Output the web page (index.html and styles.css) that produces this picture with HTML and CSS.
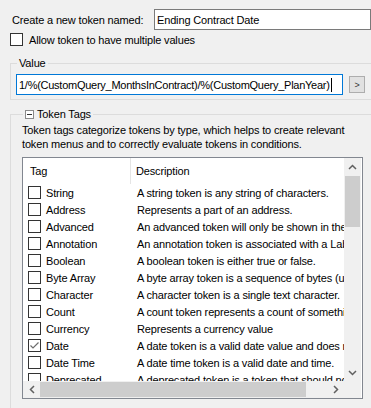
FILE: index.html
```html
<!DOCTYPE html>
<html lang="en">
<head>
  <meta charset="UTF-8">
  <title>New Token</title>
  <link rel="stylesheet" href="styles.css">
</head>
<body>

  <div class="dialog">
    <div class="name-row">
      <span class="name-label">Create a new token named:</span>
      <div class="textbox name-box">Ending Contract Date</div>
    </div>

    <div class="multi-row">
      <span class="check"></span>
      <span>Allow token to have multiple values</span>
    </div>

    <fieldset class="group value-group">
      <legend>Value</legend>
      <div class="value-row">
        <div class="textbox value-box">1/%(CustomQuery_MonthsInContract)/%(CustomQuery_PlanYear)<span class="caret"></span></div>
        <div class="pick-btn">&gt;</div>
      </div>
    </fieldset>

    <fieldset class="group tags-group">
      <legend><span class="collapse"></span>Token Tags</legend>
      <p class="tags-desc">Token tags categorize tokens by type, which helps to create relevant token menus and to correctly evaluate tokens in conditions.</p>

      <div class="listview">
        <div class="lv-content">
          <div class="lv-header">
            <div class="col-tag">Tag</div>
            <div class="col-desc">Description</div>
          </div>
          <div class="lv-row"><div class="col-tag"><span class="check"></span>String</div><div class="col-desc">A string token is any string of characters.</div></div>
          <div class="lv-row"><div class="col-tag"><span class="check"></span>Address</div><div class="col-desc">Represents a part of an address.</div></div>
          <div class="lv-row"><div class="col-tag"><span class="check"></span>Advanced</div><div class="col-desc">An advanced token will only be shown in the advanced menu.</div></div>
          <div class="lv-row"><div class="col-tag"><span class="check"></span>Annotation</div><div class="col-desc">An annotation token is associated with a Label.</div></div>
          <div class="lv-row"><div class="col-tag"><span class="check"></span>Boolean</div><div class="col-desc">A boolean token is either true or false.</div></div>
          <div class="lv-row"><div class="col-tag"><span class="check"></span>Byte Array</div><div class="col-desc">A byte array token is a sequence of bytes (usually a file).</div></div>
          <div class="lv-row"><div class="col-tag"><span class="check"></span>Character</div><div class="col-desc">A character token is a single text character.</div></div>
          <div class="lv-row"><div class="col-tag"><span class="check"></span>Count</div><div class="col-desc">A count token represents a count of something.</div></div>
          <div class="lv-row"><div class="col-tag"><span class="check"></span>Currency</div><div class="col-desc">Represents a currency value</div></div>
          <div class="lv-row"><div class="col-tag"><span class="check checked"><svg width="11" height="11" viewBox="0 0 11 11"><polyline points="1.5,5.5 4,8 9.5,2.5" fill="none" stroke="#6d6d6d" stroke-width="1.2"/></svg></span>Date</div><div class="col-desc">A date token is a valid date value and does not include a time.</div></div>
          <div class="lv-row"><div class="col-tag"><span class="check"></span>Date Time</div><div class="col-desc">A date time token is a valid date and time.</div></div>
          <div class="lv-row"><div class="col-tag"><span class="check"></span>Deprecated</div><div class="col-desc">A deprecated token is a token that should no longer be used.</div></div>
        </div>

        <div class="vscroll">
          <div class="sb-btn"><svg width="9" height="6" viewBox="0 0 9 6"><polyline points="1,5 4.5,1.5 8,5" fill="none" stroke="#606060" stroke-width="1.5"/></svg></div>
          <div class="sb-track"><div class="v-thumb"></div></div>
          <div class="sb-btn"><svg width="9" height="6" viewBox="0 0 9 6"><polyline points="1,1 4.5,4.5 8,1" fill="none" stroke="#606060" stroke-width="1.5"/></svg></div>
        </div>

        <div class="hscroll">
          <div class="sb-btn"><svg width="6" height="9" viewBox="0 0 6 9"><polyline points="5,1 1.5,4.5 5,8" fill="none" stroke="#606060" stroke-width="1.5"/></svg></div>
          <div class="sb-track h-track"><div class="h-thumb"></div></div>
          <div class="sb-btn"><svg width="6" height="9" viewBox="0 0 6 9"><polyline points="1,1 4.5,4.5 1,8" fill="none" stroke="#606060" stroke-width="1.5"/></svg></div>
        </div>

        <div class="sb-corner"></div>
      </div>
    </fieldset>
  </div>

</body>
</html>
```

FILE: styles.css
```css
* {
  margin: 0;
  padding: 0;
  box-sizing: border-box;
}

body, html {
  height: 100%;
  overflow: hidden;
}

body {
  background: #f0f0f0;
  font-family: 'Liberation Sans', Arial, sans-serif;
  font-size: 11px;
  letter-spacing: -0.15px;
  color: #000;
}

.dialog {
  padding: 9px 0 0 10px;
}

.name-row {
  display: flex;
  align-items: center;
  height: 21px;
}

.name-label {
  width: 144px;
  padding-left: 2px;
}

.textbox {
  height: 21px;
  background: #fff;
  border: 1px solid #7a7a7a;
  padding: 0 2px;
  display: flex;
  align-items: center;
  white-space: nowrap;
  overflow: hidden;
}

.name-box {
  width: 217px;
}

.multi-row {
  display: flex;
  align-items: center;
  gap: 6px;
  margin-top: 3px;
  height: 13px;
}

.check {
  display: inline-flex;
  align-items: center;
  justify-content: center;
  width: 13px;
  height: 13px;
  background: #fff;
  border: 1px solid #333;
  flex: none;
}

/* group boxes */
.group {
  border: 1px solid #dcdcdc;
  width: 375px;
  min-width: 0;
}

.group legend {
  line-height: 14px;
  padding: 0 2px;
  margin-left: 1px;
}

.value-group {
  margin-top: 10px;
  padding: 4px 0 4px 5px;
}

.value-row {
  display: flex;
  align-items: center;
}

.value-box {
  width: 327px;
  border-color: #0078d7;
  letter-spacing: -0.26px;
}

.caret {
  display: inline-block;
  width: 1px;
  height: 14px;
  margin-left: 1px;
  background: #000;
}

.pick-btn {
  width: 16px;
  height: 17px;
  margin-left: 6px;
  background: #e1e1e1;
  border: 1px solid #adadad;
  display: flex;
  align-items: center;
  justify-content: center;
  font-size: 9px;
  color: #333;
}

.tags-group {
  margin-top: 7px;
  padding: 2px 0 0 11px;
  height: 320px;
}

.tags-group legend {
  display: flex;
  align-items: center;
  gap: 3px;
  margin-left: 1px;
}

.collapse {
  position: relative;
  width: 9px;
  height: 9px;
  border: 1px solid #8a8a8a;
  background: #fff;
}

.collapse::after {
  content: "";
  position: absolute;
  left: 1px;
  top: 3px;
  width: 5px;
  height: 1px;
  background: #333;
}

.tags-desc {
  line-height: 14px;
  width: 350px;
}

/* list view */
.listview {
  margin-top: 6px;
  width: 341px;
  height: 242px;
  background: #fff;
  border: 1px solid #828790;
  display: grid;
  grid-template-columns: 321px 17px;
  grid-template-rows: 223px 17px;
}

.lv-content {
  overflow: hidden;
  white-space: nowrap;
}

.lv-header,
.lv-row {
  display: flex;
  width: 600px;
}

.lv-header {
  height: 26px;
  align-items: center;
}

.lv-header .col-tag {
  height: 100%;
  display: flex;
  align-items: center;
  padding-left: 7px;
  border-right: 1px solid #e5e5e5;
}

.lv-header .col-desc {
  padding-left: 5px;
}

.col-tag {
  width: 108px;
  flex: none;
}

.lv-row {
  height: 17px;
  align-items: center;
}

.lv-row .col-tag {
  display: flex;
  align-items: center;
  gap: 5px;
  padding-left: 5px;
}

.lv-row .col-desc {
  padding-left: 6px;
}

/* scroll bars */
.vscroll,
.hscroll,
.sb-corner {
  background: #f0f0f0;
}

.vscroll {
  display: flex;
  flex-direction: column;
}

.hscroll {
  display: flex;
}

.sb-btn {
  width: 17px;
  height: 17px;
  flex: none;
  display: flex;
  align-items: center;
  justify-content: center;
}

.sb-track {
  flex: 1;
}

.v-thumb {
  height: 51px;
  margin: 1px 1px 0;
  background: #cdcdcd;
}

.h-track {
  display: flex;
  align-items: center;
}

.h-thumb {
  width: 266px;
  height: 15px;
  background: #cdcdcd;
}
```
